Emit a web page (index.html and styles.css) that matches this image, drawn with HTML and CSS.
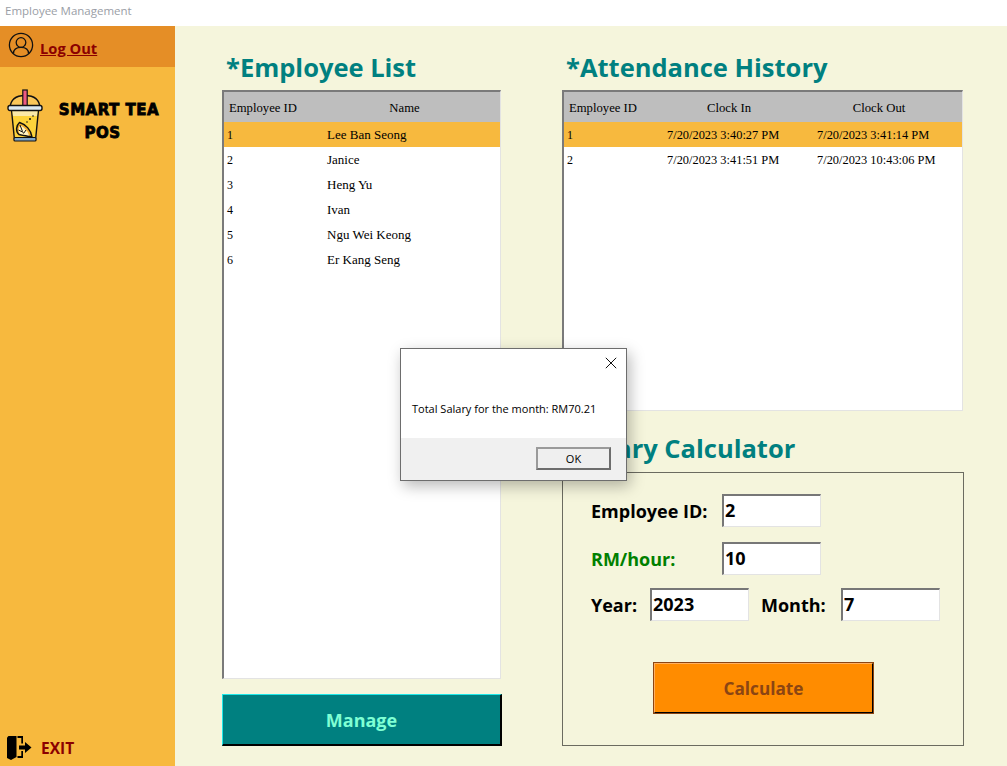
FILE: index.html
```html
<!DOCTYPE html>
<html lang="en">
<head>
<meta charset="utf-8">
<title>Employee Management</title>
<link rel="stylesheet" href="styles.css">
</head>
<body>
<div class="window">
  <header class="titlebar">Employee Management</header>
  <div class="app">
    <aside class="sidebar">
      <div class="logout">
        <svg class="user-icon" viewBox="0 0 26 26" width="26" height="26" fill="none" stroke="#111" stroke-width="1.3">
          <circle cx="13" cy="13" r="11.600"/>
          <circle cx="13" cy="10.500" r="4.800"/>
          <path d="M5.500 21.500c0-4 3-6.200 7.500-6.200s7.500 2.200 7.500 6.200"/>
        </svg>
        <a class="logout-link">Log Out</a>
      </div>
      <div class="brand">
        <svg class="cup" viewBox="0 0 36 54" width="36" height="54">
          <path d="M3 19C3.500 10.500 9.500 6.500 18 6.500S32.500 10.500 33 19z" fill="#f9c65a" stroke="#111" stroke-width="1.400"/>
          <rect x="15.800" y="1" width="4.400" height="18" fill="#ee5a83" stroke="#111" stroke-width="1.200"/>
          <path d="M4.500 21h27l-3 30H7.500z" fill="#fdd33b" stroke="#111" stroke-width="1.400"/>
          <path d="M5.500 21.500h25l-.6 5.500H6z" fill="#fbe9a8"/>
          <rect x="1" y="16.500" width="34" height="5" rx="2" fill="#dbe8f2" stroke="#111" stroke-width="1.400"/>
          <rect x="7" y="48.500" width="22" height="3.500" rx="1" fill="#7fa6c8" stroke="#111" stroke-width="1.100"/>
          <path d="M12.500 33.500c-3.500 3-4 9-.5 12l13 2.500c-1-7-6-12.500-12.500-14.500z" fill="#f6b02c" stroke="#111" stroke-width="1.500"/>
          <path d="M13.500 36.500c-2.500 2.500-2.500 6.500-.3 8.500l8.800 1.500c-1-4-4.500-8-8.500-10z" fill="#fff3c4"/>
          <path d="M13 36l2.500 6.500M11.500 41l5 2.500M19 41l-2.500 3.500" stroke="#111" stroke-width="1"/>
          <circle cx="23" cy="30" r="1" fill="#111"/><circle cx="26" cy="27" r=".8" fill="#111"/><circle cx="20" cy="33" r=".8" fill="#111"/>
        </svg>
        <div class="brand-name">SMART TEA<br><span class="brand-pos">POS</span></div>
      </div>
      <div class="exit">
        <svg class="exit-icon" viewBox="0 0 25 24" width="25" height="24">
          <path d="M0 1.500 1.500 0H9.500V21L4 24 0 22z" fill="#000"/>
          <path d="M10.500 0H16V7.500H14.300V2H10.500zM10.500 20H14.300V15H16V22H10.500z" fill="#000"/>
          <path d="M12 9.500H18V6L24.500 11.500 18 17V13.500H12z" fill="#000"/>
        </svg>
        <span class="exit-label">EXIT</span>
      </div>
    </aside>
    <main class="content">
      <section class="col-left">
        <h1 class="heading">*Employee List</h1>
        <div class="grid grid-employees">
          <table>
            <colgroup><col class="c-id"><col class="c-name"></colgroup>
            <thead><tr><th class="th-id">Employee ID</th><th class="th-name">Name</th></tr></thead>
            <tbody>
              <tr class="selected"><td>1</td><td class="td-name">Lee Ban Seong</td></tr>
              <tr><td>2</td><td class="td-name">Janice</td></tr>
              <tr><td>3</td><td class="td-name">Heng Yu</td></tr>
              <tr><td>4</td><td class="td-name">Ivan</td></tr>
              <tr><td>5</td><td class="td-name">Ngu Wei Keong</td></tr>
              <tr><td>6</td><td class="td-name">Er Kang Seng</td></tr>
            </tbody>
          </table>
        </div>
        <button class="btn-manage">Manage</button>
      </section>
      <section class="col-right">
        <h1 class="heading">*Attendance History</h1>
        <div class="grid grid-attendance">
          <table>
            <colgroup><col class="c-id"><col class="c-time"><col class="c-time"></colgroup>
            <thead><tr><th class="th-id">Employee ID</th><th class="th-time">Clock In</th><th class="th-time">Clock Out</th></tr></thead>
            <tbody>
              <tr class="selected"><td>1</td><td class="td-time">7/20/2023 3:40:27 PM</td><td class="td-time">7/20/2023 3:41:14 PM</td></tr>
              <tr><td>2</td><td class="td-time">7/20/2023 3:41:51 PM</td><td class="td-time">7/20/2023 10:43:06 PM</td></tr>
            </tbody>
          </table>
        </div>
        <h2 class="subheading">Salary Calculator</h2>
        <div class="calc">
          <div class="row row-1"><label class="lbl lbl-wide">Employee ID:</label><input class="field" value="2"></div>
          <div class="row row-2"><label class="lbl lbl-wide lbl-green">RM/hour:</label><input class="field" value="10"></div>
          <div class="row row-3"><label class="lbl lbl-year">Year:</label><input class="field" value="2023"><label class="lbl lbl-month">Month:</label><input class="field" value="7"></div>
          <button class="btn-calc">Calculate</button>
        </div>
      </section>
    </main>
  </div>
  <div class="dialog">
    <div class="dialog-body">
      <svg class="dialog-close" viewBox="0 0 12 12" width="12" height="12" fill="none" stroke="#111" stroke-width="1"><path d="M.8.800l10.400 10.400M11.200.800.800 11.200"/></svg>
      <p class="dialog-text">Total Salary for the month: RM70.21</p>
    </div>
    <div class="dialog-foot"><button class="dialog-ok">OK</button></div>
  </div>
</div>
</body>
</html>
```
FILE: styles.css
```css
* { box-sizing: border-box; }
html, body { margin: 0; height: 100%; }
body { font-family: "Open Sans", "Noto Sans", sans-serif; background: #f5f5dc; overflow: hidden; }
.window { position: relative; width: 1007px; height: 766px; display: flex; flex-direction: column; }
.titlebar { height: 26px; background: #fff; color: #9a9ea6; font-size: 11.5px; line-height: 22px; padding-left: 5px; flex: none; }
.app { flex: 1; display: flex; min-height: 0; }

.sidebar { width: 175px; flex: none; background: #f7b93e; display: flex; flex-direction: column; }
.logout { height: 41px; background: #e58e26; display: flex; align-items: flex-start; padding: 6px 0 0 8px; flex: none; }
.user-icon { flex: none; }
.logout-link { margin: 6px 0 0 6px; color: #8b0000; font-size: 14.7px; font-weight: 700; line-height: 20px; text-decoration: underline; }
.brand { display: flex; margin: 22px 0 0 7px; align-items: flex-start; }
.cup { flex: none; display: block; }
.brand-name { width: 118px; margin: 10px 0 0 7px; text-align: center; font-family: "DejaVu Sans", sans-serif; font-weight: 700; font-size: 15px; letter-spacing: .5px; line-height: 23px; color: #000; -webkit-text-stroke: .8px #000; white-space: nowrap; }
.brand-pos { display: inline-block; margin-right: 13px; }
.exit { margin-top: auto; margin-bottom: 5px; padding-left: 7px; display: flex; align-items: center; height: 26px; }
.exit-icon { flex: none; }
.exit-label { margin-left: 9px; color: #8b0000; font-size: 15.500px; font-weight: 700; }

.content { flex: 1; display: flex; padding-left: 47px; }
.col-left { width: 280px; flex: none; display: flex; flex-direction: column; }
.col-right { width: 402px; margin-left: 60px; flex: none; display: flex; flex-direction: column; }
.heading { margin: 23px 0 0 4px; height: 41px; font-size: 25.500px; font-weight: 700; line-height: 36px; color: #008080; white-space: nowrap; }

.grid { background: #fff; border-style: solid; border-width: 2px 1px 1px 2px; border-color: #7a7a7a #e3e3e3 #e3e3e3 #7a7a7a; overflow: hidden; }
.grid-employees { width: 279px; height: 589px; }
.grid-attendance { width: 401px; height: 321px; }
table { border-collapse: collapse; table-layout: fixed; width: 100%; font-family: "Liberation Serif", serif; font-size: 12px; color: #000; }
.c-id { width: 100px; }
.c-name { width: 176px; }
.c-time { width: 150px; }
thead tr { height: 30px; background: #bebebe; }
th { font-weight: 400; font-size: 12.700px; padding: 2px 0 0; text-align: center; }
.th-id { text-align: left; padding-left: 5px; }
.th-name { padding-right: 15px; }
.th-time { padding-right: 20px; }
tbody tr { height: 25px; }
td { padding: 2px 0 0 3px; white-space: nowrap; }
.td-name { font-size: 13px; padding-top: 0; }
.td-time { font-size: 12.400px; }
tr.selected { background: #f7b93e; }

.btn-manage { margin-top: 15px; width: 280px; height: 52px; background: #008080; color: #7fffd4; font: 700 18px "Open Sans", sans-serif; border-style: solid; border-width: 1px 2px 2px 1px; border-color: #1fe8e8 #000 #000 #1fe8e8; padding: 0; }

.subheading { margin: 20px 0 0 17px; height: 41px; font-size: 25.500px; line-height: 35px; font-weight: 700; color: #008080; white-space: nowrap; }
.calc { border: 1px solid #6b6b60; height: 274px; padding: 21px 0 0 28px; }
.row { display: flex; align-items: center; }
.row-2 { margin-top: 15px; }
.row-3 { margin-top: 13px; }
.lbl { height: 33px; font-size: 18px; font-weight: 700; color: #000; line-height: 35px; white-space: nowrap; }
.lbl-wide { width: 131px; }
.lbl-green { color: #008000; }
.lbl-year { width: 59px; }
.lbl-month { width: 80px; margin-left: 12px; }
.field { width: 99px; height: 33px; border-style: solid; border-width: 2px 1px 1px 2px; border-color: #777 #e3e3e3 #e3e3e3 #777; background: #fff; font: 700 18px "Open Sans", sans-serif; color: #000; padding: 0 0 2px 1px; outline: none; }
.btn-calc { display: block; margin: 41px 0 0 62px; width: 221px; height: 52px; background: #ff8c00; color: #8b4513; font: 700 17.200px "Open Sans", sans-serif; border: 2px solid; border-color: #ffb060 #000 #000 #ffb060; outline: 1px solid #8b4513; outline-offset: -1px; padding: 0; }

.dialog { position: absolute; left: 400px; top: 348px; width: 227px; height: 133px; background: #fff; border: 1px solid #6d6d6d; box-shadow: 3px 5px 14px rgba(0,0,0,.28); display: flex; flex-direction: column; }
.dialog-body { flex: 1; position: relative; padding: 50px 0 0 11px; }
.dialog-close { position: absolute; right: 9px; top: 8px; }
.dialog-text { margin: 0; font-size: 11px; line-height: 20px; color: #000; white-space: nowrap; }
.dialog-foot { height: 42px; background: #f0f0f0; flex: none; display: flex; justify-content: flex-end; padding: 9px 15px 0 0; }
.dialog-ok { width: 75px; height: 23px; background: #efefef; border: 2px solid; border-color: #9a9a9a #6d6d6d #6d6d6d #9a9a9a; font: 400 11px "Open Sans", sans-serif; color: #000; padding: 0; }
```
